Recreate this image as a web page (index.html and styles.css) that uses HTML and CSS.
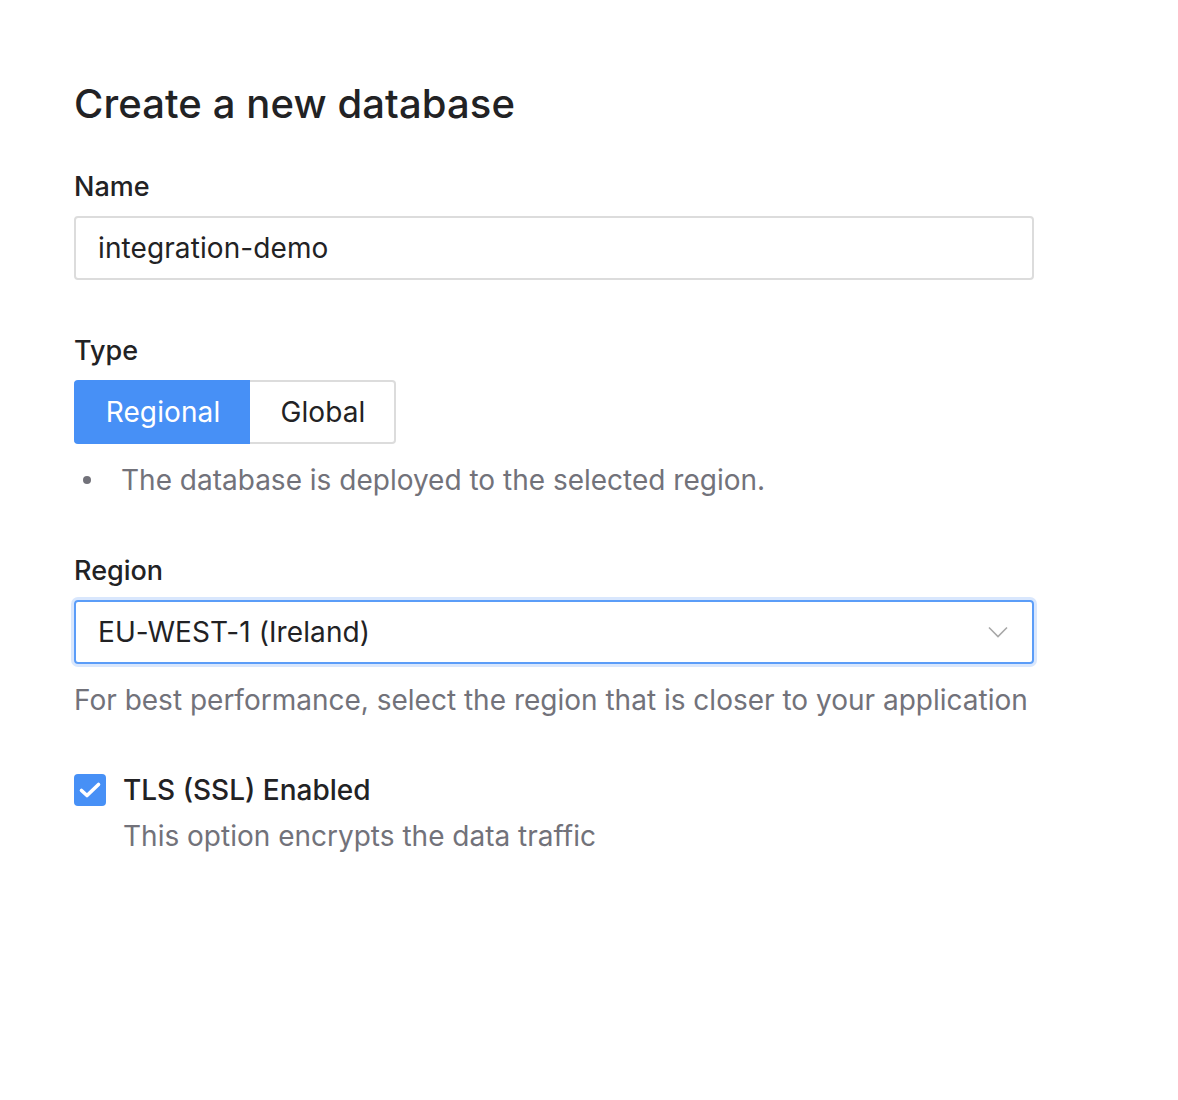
FILE: index.html
```
<!DOCTYPE html>
<html lang="en">
<head>
<meta charset="utf-8">
<title>Create a new database</title>
<link rel="stylesheet" href="styles.css">
</head>
<body>
<main class="page">
  <h1 class="title">Create a new database</h1>

  <section class="field field-name">
    <label class="label" for="name">Name</label>
    <div class="input">integration-demo</div>
  </section>

  <section class="field field-type">
    <div class="label">Type</div>
    <div class="segmented">
      <div class="seg seg-active">Regional</div>
      <div class="seg">Global</div>
    </div>
    <ul class="bullets">
      <li><span class="dot"></span><span>The database is deployed to the selected region.</span></li>
    </ul>
  </section>

  <section class="field field-region">
    <div class="label">Region</div>
    <div class="select">
      <span>EU-WEST-1 (Ireland)</span>
      <svg class="chevron" width="20" height="12" viewBox="0 0 20 12"><path d="M1 1.5 L10 10.5 L19 1.5" fill="none" stroke="#a8a8a8" stroke-width="1.6"/></svg>
    </div>
    <p class="help">For best performance, select the region that is closer to your application</p>
  </section>

  <section class="check">
    <div class="checkbox">
      <svg width="24" height="18" viewBox="0 0 24 18"><path d="M3.5 9.5 L9 14.5 L20.5 3.5" fill="none" stroke="#fff" stroke-width="3.6" stroke-linecap="round" stroke-linejoin="round"/></svg>
    </div>
    <div class="check-text">
      <div class="check-label">TLS (SSL) Enabled</div>
      <div class="check-desc">This option encrypts the data traffic</div>
    </div>
  </section>
</main>
</body>
</html>
```

FILE: styles.css
```
* { box-sizing: border-box; }
html, body { margin: 0; padding: 0; background: #fff; }
body {
  font-family: Inter, "Noto Sans", "Liberation Sans", sans-serif;
  color: #222224;
}
.page {
  padding: 80px 0 0 74px;
  width: 1100px;
}
.title {
  margin: 0;
  font-size: 40px;
  line-height: 48px;
  font-weight: 500;
  letter-spacing: 0.1px;
}
.label {
  display: block;
  font-size: 27px;
  line-height: 40px;
  font-weight: 500;
  padding-top: 1px;
  margin-bottom: 9px;
}
.field-name { margin-top: 38px; }
.field-type { margin-top: 50px; }
.field-region { margin-top: 50px; }
.input, .select {
  height: 64px;
  width: 960px;
  border: 2px solid #dcdcdc;
  border-radius: 4px;
  padding: 0 22px;
  font-size: 28px;
  letter-spacing: 0.1px;
  display: flex;
  align-items: center;
  color: #222224;
}
.select {
  border-color: #5b9df8;
  box-shadow: 0 0 0 3px #d9e7fd;
  justify-content: space-between;
  padding-right: 24px;
}
.chevron { display: block; }
.segmented {
  display: flex;
  height: 64px;
}
.seg {
  display: flex;
  align-items: center;
  justify-content: center;
  font-size: 28px;
  letter-spacing: 0.1px;
  border: 2px solid #dcdcdc;
  border-left: none;
  border-radius: 0 4px 4px 0;
  width: 146px;
  padding-left: 2px;
}
.seg-active {
  background: #4790f6;
  border-color: #4790f6;
  color: #fff;
  border-radius: 4px 0 0 4px;
  width: 176px;
  padding-left: 4px;
}
.bullets {
  list-style: none;
  margin: 16px 0 0;
  padding: 0 0 0 9px;
  font-size: 28px;
  line-height: 40px;
  color: #72727a;
}
.bullets li {
  display: flex;
  align-items: center;
  gap: 30px;
}
.dot {
  width: 8px;
  height: 8px;
  border-radius: 50%;
  background: #72727a;
  flex: none;
}
.help {
  margin: 16px 0 0;
  font-size: 28px;
  line-height: 40px;
  white-space: nowrap;
  color: #72727a;
}
.check {
  margin-top: 54px;
  display: flex;
  gap: 17px;
}
.checkbox {
  width: 32px;
  height: 32px;
  border-radius: 4px;
  background: #4790f6;
  display: flex;
  align-items: center;
  justify-content: center;
  flex: none;
}
.check-text { margin-top: -4px; }
.check-label {
  font-size: 28px;
  line-height: 40px;
  font-weight: 500;
}
.check-desc {
  margin-top: 6px;
  font-size: 28px;
  line-height: 40px;
  color: #72727a;
}
```
